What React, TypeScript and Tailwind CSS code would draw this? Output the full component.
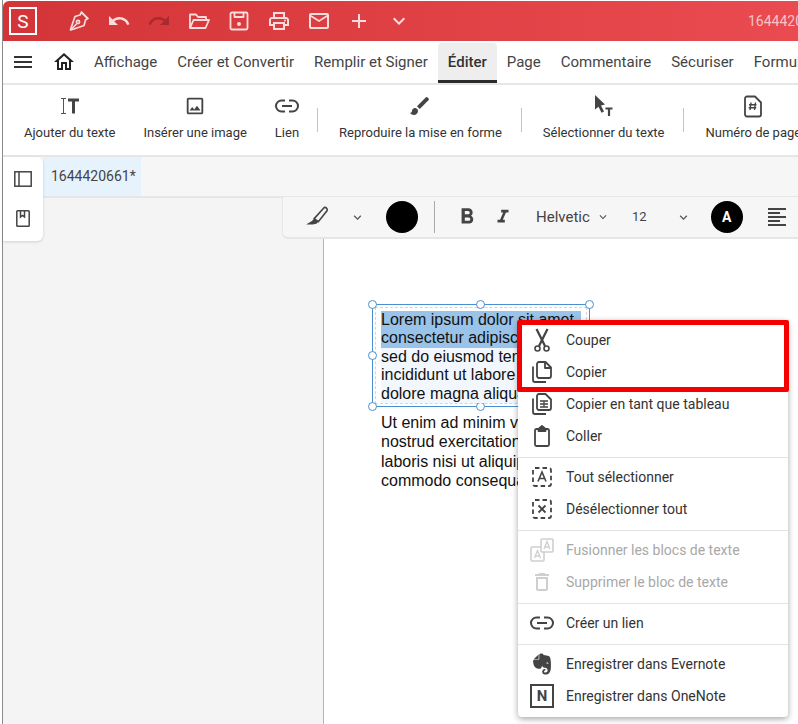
import type { ReactNode } from 'react';
import {
  MdAdd,
  MdBrush,
  MdFormatAlignLeft,
  MdFormatBold,
  MdFormatItalic,
  MdKeyboardArrowDown,
  MdMailOutline,
  MdMenu,
  MdOutlineDelete,
  MdOutlineHome,
  MdOutlineImage,
  MdOutlinePrint,
  MdRedo,
  MdUndo,
} from 'react-icons/md';
import { FaEvernote } from 'react-icons/fa';

const tabs = ['Affichage', 'Créer et Convertir', 'Remplir et Signer', 'Éditer', 'Page', 'Commentaire', 'Sécuriser', 'Formulaire'];

function PenNib() {
  return (
    <svg width="24" height="24" viewBox="0 0 24 24" fill="none" stroke="currentColor" strokeWidth="1.700" strokeLinejoin="round">
      <path d="M14.500 3.500l6 6-2 1.500-1.500 5.500L7 20l-3.500 1 1-3.500L8 7.500l5-1.500z" />
      <path d="M3.500 21l6-6" />
      <circle cx="11" cy="13" r="1.600" />
      <path d="M14 2.500l7.500 7.500" />
    </svg>
  );
}

function FolderIcon() {
  return (
    <svg width="24" height="24" viewBox="0 0 24 24" fill="none" stroke="currentColor" strokeWidth="1.800" strokeLinejoin="round">
      <path d="M3 19V5.500h6l2 2.500h8v3" />
      <path d="M3 19l3.500-8H22l-3.500 8z" />
    </svg>
  );
}

function SaveIcon() {
  return (
    <svg width="24" height="24" viewBox="0 0 24 24" fill="none" stroke="currentColor" strokeWidth="1.800" strokeLinejoin="round">
      <rect x="3.500" y="3.500" width="17" height="17" rx="1.500" />
      <path d="M7.500 3.500v4.500h9V3.500" />
      <circle cx="12" cy="15" r="2" fill="currentColor" stroke="none" />
    </svg>
  );
}

function LinkIcon({ color = '#444' }: { color?: string }) {
  return (
    <svg width="24" height="14" viewBox="0 0 24 14" fill="none" stroke={color} strokeWidth="2">
      <path d="M10 1.500H6.500a5.500 5.500 0 0 0 0 11H10" />
      <path d="M14 1.500h3.500a5.500 5.500 0 0 1 0 11H14" />
      <path d="M7 7h10" />
    </svg>
  );
}

function ScissorsIcon() {
  return (
    <svg width="18" height="24" viewBox="0 0 18 24" fill="none" stroke="#444">
      <path d="M3.500 1l8.500 17" strokeWidth="2.200" />
      <path d="M14.500 1L6 18" strokeWidth="2.200" />
      <circle cx="4.500" cy="20.500" r="2.500" strokeWidth="1.600" />
      <circle cx="13.500" cy="20.500" r="2.500" strokeWidth="1.600" />
    </svg>
  );
}

function AddTextIcon() {
  return (
    <svg width="20" height="20" viewBox="0 0 20 20">
      <path d="M1 2.500h5M1 17.500h5M3.500 2.500v15" fill="none" stroke="#555" strokeWidth="1" />
      <path d="M8 2.500h11v3h-4v12h-3v-12H8z" fill="#444" />
    </svg>
  );
}

function SelectTextIcon() {
  return (
    <svg width="24" height="24" viewBox="0 0 24 24">
      <path d="M3 1l10 9.500-4 1 3 6-2.500 1.200-3-6L3 15.500z" fill="#444" />
      <path d="M13.500 13.500h7v2h-2.400v6.500h-2.200v-6.500h-2.400z" fill="#444" />
    </svg>
  );
}

function PageNumberIcon() {
  return (
    <svg width="22" height="24" viewBox="0 0 22 24" fill="none">
      <path d="M3 4.500a2 2 0 0 1 2-2h8l6 6v12a2 2 0 0 1-2 2H5a2 2 0 0 1-2-2z" stroke="#444" strokeWidth="1.800" strokeLinejoin="round" />
      <path d="M9 8.500l-1 7.500M13.500 8.500l-1 7.500M7 10.700h7.500M6.700 13.800h7.500" stroke="#444" strokeWidth="1.400" />
    </svg>
  );
}

function PanelIcon() {
  return (
    <svg width="18" height="16" viewBox="0 0 18 16" fill="none" stroke="#444" strokeWidth="1.500">
      <rect x="0.800" y="0.800" width="16.400" height="14.400" />
      <path d="M5 1v14" />
    </svg>
  );
}

function BookmarkIcon() {
  return (
    <svg width="14" height="17" viewBox="0 0 14 17" fill="none" stroke="#444" strokeWidth="1.500">
      <rect x="0.800" y="0.800" width="12.400" height="15.400" rx="0.800" />
      <path d="M4.500 1v6l2-1.500 2 1.500V1" />
    </svg>
  );
}

function HighlighterIcon() {
  return (
    <svg width="26" height="26" viewBox="0 0 24 24" fill="none">
      <path d="M8.500 13.500L17.500 3.500c1.500-1 3.800 1 2.800 2.800l-8 10z" stroke="#444" strokeWidth="1.500" />
      <path d="M8.500 13.500l3.800 2.800-1.800 2-3.500.700H1l5-3z" fill="#444" />
    </svg>
  );
}

function CopyIcon() {
  return (
    <svg width="20" height="22" viewBox="0 0 20 22" fill="none" stroke="#444" strokeWidth="1.800" strokeLinejoin="round">
      <path d="M1 5.500v13.500a2 2 0 0 0 2 2h11" />
      <path d="M5 3a2 2 0 0 1 2-2h6.500L19 6.500V15a2 2 0 0 1-2 2H7a2 2 0 0 1-2-2z" />
      <path d="M13 1v6h6" />
    </svg>
  );
}

function CopyTableIcon() {
  return (
    <svg width="20" height="22" viewBox="0 0 20 22" fill="none" stroke="#444" strokeWidth="1.800" strokeLinejoin="round">
      <path d="M1 5.500v13.500a2 2 0 0 0 2 2h11" />
      <path d="M5 3a2 2 0 0 1 2-2h6.500L19 6.500V15a2 2 0 0 1-2 2H7a2 2 0 0 1-2-2z" />
      <path d="M8 8h8M8 11h8M8 14h8M12 8v6" strokeWidth="1.300" />
    </svg>
  );
}

function PasteIcon() {
  return (
    <svg width="16" height="22" viewBox="0 0 16 22" fill="none" stroke="#444" strokeWidth="1.800" strokeLinejoin="round">
      <path d="M4.500 4H2.500a1.500 1.500 0 0 0-1.500 1.500v14A1.500 1.500 0 0 0 2.500 21h11a1.500 1.500 0 0 0 1.500-1.500v-14A1.500 1.500 0 0 0 13.500 4h-2" />
      <path d="M4.500 6V4l3.500-3 3.500 3v2z" fill="#444" />
    </svg>
  );
}

function DashedBox({ children }: { children: ReactNode }) {
  return (
    <svg width="20" height="20" viewBox="0 0 20 20" fill="none">
      <rect x="1" y="1" width="18" height="18" rx="2" stroke="#444" strokeWidth="1.800" strokeDasharray="4.500 3" />
      {children}
    </svg>
  );
}

function MergeIcon() {
  return (
    <svg width="24" height="24" viewBox="0 0 24 24" fill="none" stroke="#cfcfcf" strokeWidth="1.600">
      <rect x="1" y="9" width="13" height="14" rx="1" />
      <rect x="11" y="1" width="12" height="13" rx="1" fill="#fff" />
      <path d="M4.500 20l3-7.500 3 7.500M5.500 18h4M14 11l3-7.500 3 7.500M15 9h4" strokeWidth="1.300" />
    </svg>
  );
}

function ToolItem({ icon, label }: { icon: ReactNode; label: string }) {
  return (
    <div className="flex flex-col items-center px-[14px] shrink-0">
      <div className="h-[28px] flex items-center justify-center text-[#444]">{icon}</div>
      <div className="mt-[5px] text-[13px] leading-[16px] text-[#333] whitespace-nowrap">{label}</div>
    </div>
  );
}

function ToolSep({ className }: { className: string }) {
  return <div className={`w-px h-[24px] bg-[#c4c4c4] mt-[16px] shrink-0 ${className}`} />;
}

function MenuItem({ icon, label, disabled }: { icon: ReactNode; label: string; disabled?: boolean }) {
  return (
    <div className="h-[32px] flex items-center">
      <div className="w-[48px] flex items-center justify-center shrink-0">{icon}</div>
      <span className={disabled ? 'text-[14px] text-[#a8a8a8]' : 'text-[14px] text-[#333]'}>{label}</span>
    </div>
  );
}

function MenuSep() {
  return <div className="h-px bg-[#e2e2e2] mt-[5px] mb-[3px]" />;
}

function Handle({ className }: { className: string }) {
  return <div className={`absolute w-[9px] h-[9px] rounded-full border border-[#4a90d0] bg-white ${className}`} />;
}

export default function App() {
  return (
    <div className="relative w-[798px] h-[724px] overflow-hidden bg-white font-['Roboto',sans-serif]">
      <div className="ml-[2px] h-full border-l border-[#8c8c8c] flex flex-col">
        {/* Title bar */}
        <div className="mt-px h-[40px] shrink-0 rounded-tl-[6px] bg-gradient-to-r from-[#d33437] to-[#e94b50] flex items-center text-[#fbdcdc] overflow-hidden">
          <div className="ml-[6px] w-[28px] h-[28px] shrink-0 border-2 border-white flex items-center justify-center text-white text-[19px] leading-none">S</div>
          <div className="ml-[30px] flex items-center gap-[16px] shrink-0">
            <PenNib />
            <MdUndo size={24} />
            <MdRedo size={24} className="text-[#a82a2c]" />
            <FolderIcon />
            <SaveIcon />
            <MdOutlinePrint size={24} />
            <MdMailOutline size={24} />
            <MdAdd size={24} />
            <MdKeyboardArrowDown size={24} />
          </div>
          <span className="ml-[337px] shrink-0 text-[14px] whitespace-nowrap text-[#f6c4c6]">1644420661</span>
        </div>

        {/* Ribbon tabs */}
        <div className="h-[44px] shrink-0 border-b-2 border-[#e6e6e6] flex items-center overflow-hidden bg-white">
          <MdMenu size={24} className="ml-[8px] shrink-0 text-[#333]" />
          <MdOutlineHome size={24} className="ml-[17px] shrink-0 text-[#222]" />
          <div className="ml-[8px] flex h-full items-end">
            {tabs.map((t) => (
              <div
                key={t}
                className={
                  t === 'Éditer'
                    ? 'h-[40px] px-[10px] pt-[2px] flex items-center text-[15px] font-medium text-[#333] bg-[#eeeeee] rounded-t-[4px] border-b-[3px] border-[#2b2b2b] whitespace-nowrap shrink-0'
                    : 'h-[40px] px-[10px] pb-[1px] flex items-center text-[15px] text-[#444] whitespace-nowrap shrink-0'
                }
              >
                {t}
              </div>
            ))}
          </div>
        </div>

        {/* Tool ribbon */}
        <div className="h-[72px] shrink-0 border-b-2 border-[#e6e6e6] flex items-start pl-[7px] pt-[7px] overflow-hidden bg-white">
          <ToolItem icon={<AddTextIcon />} label="Ajouter du texte" />
          <ToolItem icon={<MdOutlineImage size={22} />} label="Insérer une image" />
          <ToolItem icon={<LinkIcon />} label="Lien" />
          <ToolSep className="ml-[4px] mr-[7px]" />
          <ToolItem icon={<MdBrush size={24} />} label="Reproduire la mise en forme" />
          <ToolSep className="ml-[5px] mr-[7px]" />
          <ToolItem icon={<SelectTextIcon />} label="Sélectionner du texte" />
          <ToolSep className="ml-[4px] mr-[8px]" />
          <ToolItem icon={<PageNumberIcon />} label="Numéro de page" />
        </div>

        {/* Document tabs */}
        <div className="h-[41px] shrink-0 bg-[#f6f6f6] border-b-2 border-[#e6e6e6] flex">
          <div className="ml-[40px] w-[98px] bg-[#e6f3fd] flex items-center pl-[8px] text-[14px] text-[#444]">1644420661*</div>
        </div>

        {/* Workspace */}
        <div className="flex-1 flex min-h-0">
          <div className="w-[321px] shrink-0 bg-[#f4f4f4] border-r border-[#b5b5b5]" />
          <div className="flex-1 bg-white" />
        </div>
      </div>

      {/* Left floating panel */}
      <div className="absolute left-[3px] top-[157px] w-[40px] h-[84px] bg-white rounded-r-[6px] shadow-[0_1px_3px_rgba(0,0,0,0.15)] flex flex-col items-center pt-[14px] gap-[23px]">
        <PanelIcon />
        <BookmarkIcon />
      </div>

      {/* Format toolbar */}
      <div className="absolute left-[282px] top-[197px] w-[516px] h-[42px] bg-[#f6f6f6] rounded-bl-[6px] border-l border-b-2 border-[#e6e6e6] flex items-center overflow-hidden">
        <div className="ml-[22px] shrink-0"><HighlighterIcon /></div>
        <MdKeyboardArrowDown size={15} className="ml-[19px] shrink-0 text-[#555]" />
        <div className="ml-[21px] w-[32px] h-[32px] rounded-full bg-black shrink-0" />
        <div className="ml-[16px] w-px h-[32px] bg-[#aaaaaa] shrink-0" />
        <MdFormatBold size={26} className="ml-[19px] shrink-0 text-[#444]" />
        <MdFormatItalic size={22} className="ml-[12px] shrink-0 text-[#444]" />
        <div className="ml-[22px] w-[54px] shrink-0 overflow-hidden text-[15px] text-[#444] whitespace-nowrap">Helvetica</div>
        <MdKeyboardArrowDown size={14} className="ml-[6px] shrink-0 text-[#555]" />
        <span className="ml-[22px] shrink-0 text-[13px] text-[#444]">12</span>
        <MdKeyboardArrowDown size={15} className="ml-[29px] shrink-0 text-[#555]" />
        <div className="ml-[20px] w-[32px] h-[32px] rounded-full bg-black shrink-0 flex items-center justify-center text-white text-[14px] font-bold">A</div>
        <MdFormatAlignLeft size={24} className="ml-[22px] shrink-0 text-[#444]" />
      </div>

      {/* Text on page */}
      <div className="absolute left-[372px] top-[304px] w-[218px] h-[103px] border border-[#4a90d0]">
        <div className="absolute inset-[2px] border border-dashed border-[#d5d5d5]" />
        <Handle className="left-[-5px] top-[-5px]" />
        <Handle className="left-[103px] top-[-5px]" />
        <Handle className="left-[212px] top-[-5px]" />
        <Handle className="left-[-5px] top-[46px]" />
        <Handle className="left-[-5px] top-[97px]" />
        <Handle className="left-[103px] top-[97px]" />
        <Handle className="left-[212px] top-[97px]" />
        <div className="absolute left-[8px] top-[6px] w-[200px] text-[16px] leading-[18.400px] text-[#111] font-['Liberation_Sans',sans-serif] whitespace-nowrap">
          <div className="bg-[#99c3e8]">Lorem ipsum dolor sit amet,</div>
          <div className="bg-[#99c3e8]">consectetur adipiscing elit,</div>
          <div className="bg-[#f1f7fd]">sed do eiusmod tempor</div>
          <div className="bg-[#f1f7fd]">incididunt ut labore et</div>
          <div className="bg-[#f1f7fd]">dolore magna aliqua.</div>
        </div>
      </div>
      <div className="absolute left-[381px] top-[413px] text-[16px] leading-[19.300px] text-[#111] font-['Liberation_Sans',sans-serif] whitespace-nowrap">
        <div>Ut enim ad minim veniam,</div>
        <div>nostrud exercitation ullamco</div>
        <div>laboris nisi ut aliquip ex ea</div>
        <div>commodo consequat.</div>
      </div>

      {/* Context menu */}
      <div className="absolute left-[518px] top-[320px] w-[270px] h-[397px] bg-white rounded-[4px] shadow-[0_2px_6px_rgba(0,0,0,0.35)] pt-[4px]">
        <MenuItem icon={<ScissorsIcon />} label="Couper" />
        <MenuItem icon={<CopyIcon />} label="Copier" />
        <MenuItem icon={<CopyTableIcon />} label="Copier en tant que tableau" />
        <MenuItem icon={<PasteIcon />} label="Coller" />
        <MenuSep />
        <MenuItem icon={<DashedBox><path d="M6 14.500l4-9.500 4 9.500M7.300 11.500h5.400" stroke="#444" strokeWidth="1.600" /></DashedBox>} label="Tout sélectionner" />
        <MenuItem icon={<DashedBox><path d="M6.500 6.500l7 7M13.500 6.500l-7 7" stroke="#444" strokeWidth="1.800" /></DashedBox>} label="Désélectionner tout" />
        <MenuSep />
        <MenuItem icon={<MergeIcon />} label="Fusionner les blocs de texte" disabled />
        <MenuItem icon={<MdOutlineDelete size={24} className="text-[#cfcfcf]" />} label="Supprimer le bloc de texte" disabled />
        <MenuSep />
        <MenuItem icon={<LinkIcon />} label="Créer un lien" />
        <MenuSep />
        <MenuItem icon={<FaEvernote size={24} className="text-[#444]" />} label="Enregistrer dans Evernote" />
        <MenuItem icon={<div className="w-[24px] h-[24px] border-2 border-[#444] flex items-center justify-center text-[15px] font-bold text-[#444]">N</div>} label="Enregistrer dans OneNote" />
      </div>

      {/* Red highlight frame */}
      <div className="absolute left-[517px] top-[320px] w-[272px] h-[72px] border-[5px] border-[#f50000] rounded-[2px]" />
    </div>
  );
}
